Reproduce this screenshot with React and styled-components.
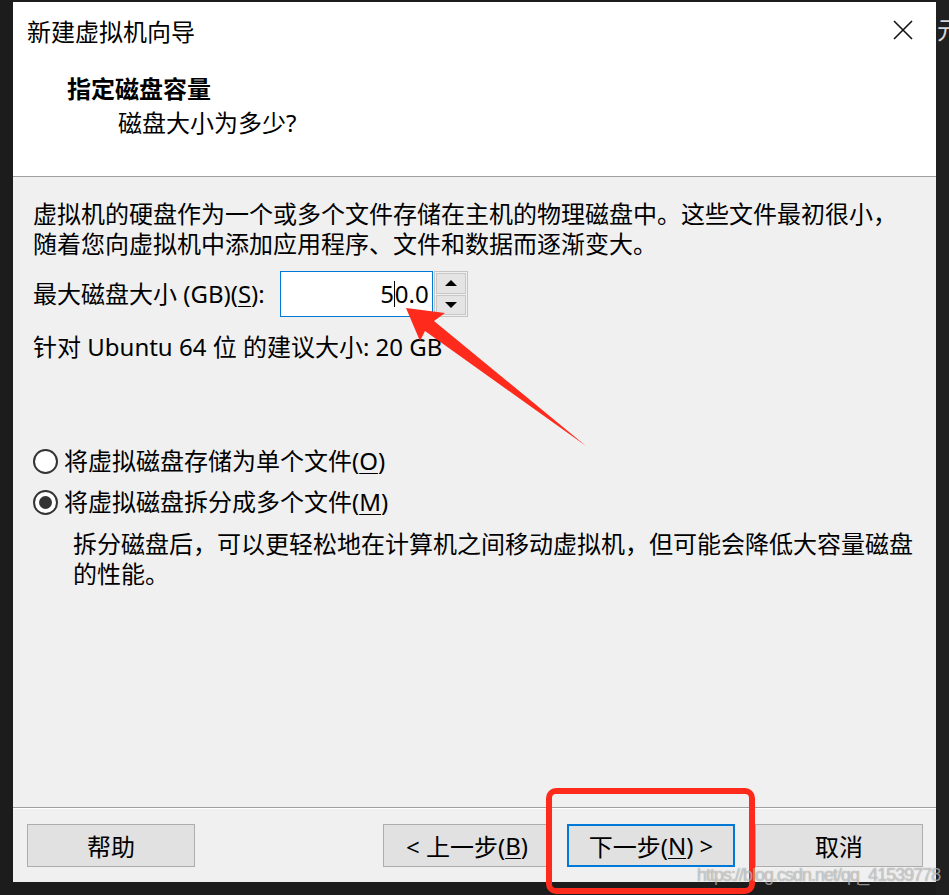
import React from "react";
import styled, { createGlobalStyle } from "styled-components";

const GlobalStyle = createGlobalStyle`
  html, body {
    margin: 0;
    padding: 0;
    overflow: hidden;
    background: #1c1c1c;
  }
  body {
    font-family: "Noto Sans", "Noto Sans CJK SC", sans-serif;
    color: #000;
  }
`;

const Page = styled.div`
  position: relative;
  width: 949px;
  height: 895px;
  display: flex;
  background: #1c1c1c;
  overflow: hidden;
`;

const Window = styled.div`
  margin: 2px 0 0 13px;
  width: 923px;
  height: 880px;
  display: flex;
  flex-direction: column;
  background: #f0f0f0;
  flex-shrink: 0;
`;

const DesktopStrip = styled.div`
  flex: 1;
  background: #202020;
  color: #d8d8d8;
  font-family: "Noto Sans CJK SC", sans-serif;
  font-size: 24px;
  line-height: 24px;
  padding: 17px 0 0 1px;
  white-space: nowrap;
  overflow: hidden;
`;

const TitleBar = styled.div`
  height: 56px;
  display: flex;
  align-items: center;
  justify-content: space-between;
  padding: 0 23px 0 14px;
  background: #fff;
`;

const Title = styled.div`
  font-family: "Noto Sans CJK SC", sans-serif;
  font-size: 24px;
`;

const CloseButton = styled.div`
  width: 20px;
  height: 20px;
  display: flex;
`;

const Header = styled.div`
  background: #fff;
  border-bottom: 1px solid #a0a0a0;
  padding: 13px 0 0 54px;
  box-sizing: border-box;
  height: 119px;
`;

const Heading = styled.div`
  font-family: "Noto Sans CJK SC", sans-serif;
  font-weight: 700;
  font-size: 24px;
  line-height: 34px;
`;

const SubHeading = styled.div`
  font-size: 24px;
  line-height: 34px;
  margin-top: 1px;
  padding-left: 51px;
`;

const Content = styled.div`
  flex: 1;
  border-bottom: 1px solid #a0a0a0;
  padding: 22px 0 0 20px;
  display: flex;
  flex-direction: column;
  font-size: 24px;
  line-height: 30px;
`;

const Paragraph = styled.div`
  margin-top: ${(p) => p.$top || 0}px;
  padding-left: ${(p) => p.$indent || 0}px;
`;

const SizeRow = styled.div`
  margin-top: 12px;
  display: flex;
  align-items: center;
`;

const SizeInput = styled.div`
  margin-left: 15px;
  width: 153px;
  height: 46px;
  box-sizing: border-box;
  border: 1px solid #0078d7;
  background: #fff;
  display: flex;
  align-items: center;
  justify-content: flex-end;
  padding-right: 3px;
  font-size: 24px;
`;

const Caret = styled.span`
  display: inline-block;
  width: 1px;
  height: 26px;
  background: #000;
  vertical-align: middle;
`;

const Spinner = styled.div`
  margin-left: 1px;
  width: 34px;
  height: 46px;
  box-sizing: border-box;
  border: 1px solid #c4c4c4;
  display: flex;
  flex-direction: column;
  gap: 1px;
  padding: 1px;
  background: #f0f0f0;
`;

const SpinButton = styled.div`
  flex: 1;
  background: #e4e4e4;
  border: 1px solid #c8c8c8;
  display: flex;
  align-items: center;
  justify-content: center;
`;

const Triangle = styled.span`
  width: 0;
  height: 0;
  border-left: 6px solid transparent;
  border-right: 6px solid transparent;
  ${(p) =>
    p.$down ? "border-top: 6px solid #000;" : "border-bottom: 6px solid #000;"}
`;

const RadioRow = styled.label`
  display: flex;
  align-items: center;
  margin-top: ${(p) => p.$top}px;
`;

const RadioCircle = styled.span`
  width: 25px;
  height: 25px;
  box-sizing: border-box;
  border-radius: 50%;
  border: 2px solid #333;
  background: #fff;
  margin-right: 6px;
  display: flex;
  align-items: center;
  justify-content: center;

  &::after {
    content: "";
    width: 13px;
    height: 13px;
    border-radius: 50%;
    background: ${(p) => (p.$checked ? "#333" : "transparent")};
  }
`;

const Key = styled.span`
  text-decoration: underline;
  text-underline-offset: 3px;
  text-decoration-thickness: 1px;
`;

const Footer = styled.div`
  border-top: 1px solid #fff;
  display: flex;
  align-items: flex-start;
  padding: 15px 13px 0 14px;
  box-sizing: border-box;
  height: 74px;
`;

const Button = styled.div`
  width: 168px;
  height: 43px;
  box-sizing: border-box;
  background: #e1e1e1;
  border: ${(p) => (p.$focused ? "2px solid #0078d7" : "1px solid #adadad")};
  display: flex;
  align-items: center;
  justify-content: center;
  font-size: 24px;
  margin-left: ${(p) => p.$gap || 0}px;
`;

const Watermark = styled.div`
  position: absolute;
  left: 697px;
  top: 865px;
  font-family: "Liberation Sans", Arial, sans-serif;
  font-size: 18px;
  color: rgba(255, 255, 255, 0.55);
  text-shadow: 0 0 1px rgba(0, 0, 0, 0.5);
  white-space: nowrap;
  letter-spacing: -1px;
`;

const HighlightBox = styled.div`
  position: absolute;
  left: 546px;
  top: 788px;
  width: 209px;
  height: 106px;
  box-sizing: border-box;
  border: 6px solid #fe2a1c;
  border-radius: 10px;
`;

const ArrowLayer = styled.svg`
  position: absolute;
  left: 0;
  top: 0;
  pointer-events: none;
`;

export default function App() {
  return (
    <>
      <GlobalStyle />
      <Page>
        <Window>
          <TitleBar>
            <Title>新建虚拟机向导</Title>
            <CloseButton>
              <svg width="20" height="20" viewBox="0 0 20 20">
                <path d="M1 1 L19 19 M19 1 L1 19" stroke="#111" strokeWidth="1.6" fill="none" />
              </svg>
            </CloseButton>
          </TitleBar>
          <Header>
            <Heading>指定磁盘容量</Heading>
            <SubHeading>磁盘大小为多少?</SubHeading>
          </Header>
          <Content>
            <Paragraph>
              虚拟机的硬盘作为一个或多个文件存储在主机的物理磁盘中。这些文件最初很小，
              <br />
              随着您向虚拟机中添加应用程序、文件和数据而逐渐变大。
            </Paragraph>
            <SizeRow>
              <span>
                最大磁盘大小 (GB)(<Key>S</Key>):
              </span>
              <SizeInput>
                5<Caret />0.0
              </SizeInput>
              <Spinner>
                <SpinButton>
                  <Triangle />
                </SpinButton>
                <SpinButton>
                  <Triangle $down />
                </SpinButton>
              </Spinner>
            </SizeRow>
            <Paragraph $top={15}>针对 Ubuntu 64 位 的建议大小: 20 GB</Paragraph>
            <RadioRow $top={84}>
              <RadioCircle />
              将虚拟磁盘存储为单个文件(<Key>O</Key>)
            </RadioRow>
            <RadioRow $top={11}>
              <RadioCircle $checked />
              将虚拟磁盘拆分成多个文件(<Key>M</Key>)
            </RadioRow>
            <Paragraph $top={12} $indent={40}>
              拆分磁盘后，可以更轻松地在计算机之间移动虚拟机，但可能会降低大容量磁盘
              <br />
              的性能。
            </Paragraph>
          </Content>
          <Footer>
            <Button>帮助</Button>
            <Button $gap={188}>
              &lt; 上一步(<Key>B</Key>)
            </Button>
            <Button $gap={16} $focused>
              下一步(<Key>N</Key>) &gt;
            </Button>
            <Button $gap={20}>取消</Button>
          </Footer>
        </Window>
        <DesktopStrip>元</DesktopStrip>

        <ArrowLayer width="949" height="895" viewBox="0 0 949 895">
          <polygon
            points="406,308 445,313 434,321 586,446 425,331 420,341"
            fill="#fe2a1c"
          />
        </ArrowLayer>
        <HighlightBox />
        <Watermark>https://blog.csdn.net/qq_41539778</Watermark>
      </Page>
    </>
  );
}
